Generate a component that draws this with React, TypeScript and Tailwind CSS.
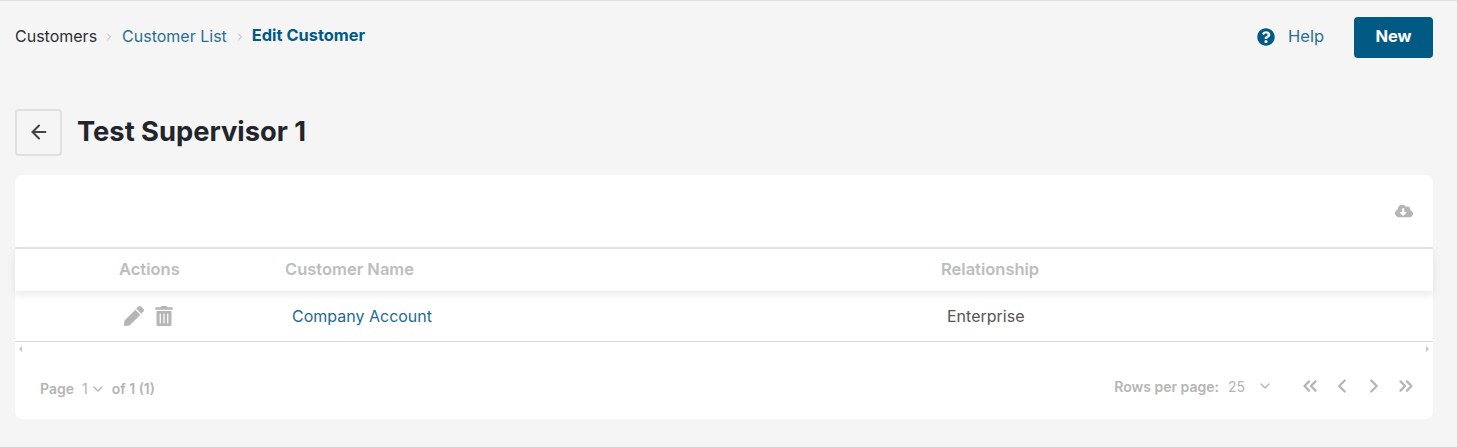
import { ArrowLeft, ChevronDown, ChevronLeft, ChevronRight, ChevronsLeft, ChevronsRight } from "lucide-react";
import { FaCloudDownloadAlt, FaPen, FaQuestionCircle, FaTrashAlt } from "react-icons/fa";

export default function App() {
  return (
    <div className="h-[447px] w-[1457px] overflow-hidden border-t border-[#e0e0e0] bg-[#f5f5f5] pl-[15px] pr-[24px] font-['Inter',sans-serif]">
      <header className="flex h-[108px] items-start justify-between pt-[16px]">
        <nav className="flex items-center pt-[7px] text-[16px] leading-[22px]">
          <span className="text-[#2b2f33]">Customers</span>
          <ChevronRight className="ml-[6px] mr-[7px] mt-[2px] h-3 w-3 text-[#b0b0b0]" />
          <span className="text-[#2a6f92]">Customer List</span>
          <ChevronRight className="ml-[7px] mr-[6px] mt-[2px] h-3 w-3 text-[#b0b0b0]" />
          <span className="pb-[2px] text-[16.4px] font-bold text-[#005a84]">Edit Customer</span>
        </nav>
        <div className="flex items-center">
          <FaQuestionCircle className="mb-[2px] mr-[1px] h-[18px] w-[18px] text-[#005a84]" />
          <span className="mb-[2px] ml-[12px] mr-[30px] text-[16.5px] text-[#2a6f92]">Help</span>
          <button className="h-[41px] w-[79px] rounded bg-[#005a84] pb-[2px] text-[16.5px] font-bold text-white">New</button>
        </div>
      </header>
      <div className="flex items-center gap-[15px]">
        <button className="flex h-[47px] w-[47px] items-center justify-center rounded border-2 border-[#e0e0e0] pb-[2px]">
          <ArrowLeft className="h-[22px] w-[22px] text-[#444]" strokeWidth={2.25} />
        </button>
        <h1 className="text-[27.3px] font-bold text-[#22252a]">Test Supervisor 1</h1>
      </div>
      <section className="mt-[19px] h-[244px] rounded-lg bg-white">
        <div className="flex h-[74px] items-center justify-end border-b-2 border-[#e4e4e4] pr-[20px]">
          <FaCloudDownloadAlt className="h-[18px] w-[18px] text-[#b5b5b5]" />
        </div>
        <div className="flex h-[42px] items-center pb-[2px] text-[16.5px] font-semibold text-[#bdbdbd] shadow-[0_4px_8px_rgba(0,0,0,0.08)]">
          <span className="ml-[104px] w-[166px]">Actions</span>
          <span className="w-[656px]">Customer Name</span>
          <span>Relationship</span>
        </div>
        <div className="flex h-[51px] items-center border-b border-[#d8d8d8] text-[16px]">
          <div className="ml-[109px] flex w-[168px] items-center gap-[10px] text-[#b5b5b5]">
            <FaPen className="h-[20px] w-[20px]" />
            <FaTrashAlt className="h-[20px] w-[20px]" />
          </div>
          <span className="w-[655px] text-[#1f6a8e]">Company Account</span>
          <span className="text-[#555]">Enterprise</span>
        </div>
        <div className="flex h-[14px] items-center justify-between px-[4px]">
          <span className="border-y-[3px] border-r-[3px] border-y-transparent border-r-[#c8c8c8]" />
          <span className="border-y-[3px] border-l-[3px] border-y-transparent border-l-[#c8c8c8]" />
        </div>
        <footer className="flex h-[62px] items-start justify-between pl-[25px] pr-[16px] pt-[18px] text-[14px] font-semibold text-[#b5b5b5]">
          <div className="flex items-center pt-[4px]">
            <span>Page</span>
            <span className="ml-[8px] font-normal">1</span>
            <ChevronDown className="ml-[2px] h-4 w-4" />
            <span className="ml-[6px]">of 1 (1)</span>
          </div>
          <div className="flex items-center">
            <div className="flex items-center pt-[2px]">
              <span>Rows per page:</span>
              <span className="ml-[9px] font-normal">25</span>
            </div>
            <ChevronDown className="ml-[12px] h-4 w-4" />
            <div className="ml-[26px] flex gap-[10px]">
              <ChevronsLeft className="h-[22px] w-[22px]" strokeWidth={2.5} />
              <ChevronLeft className="h-[22px] w-[22px]" strokeWidth={2.5} />
              <ChevronRight className="h-[22px] w-[22px]" strokeWidth={2.5} />
              <ChevronsRight className="h-[22px] w-[22px]" strokeWidth={2.5} />
            </div>
          </div>
        </footer>
      </section>
    </div>
  );
}
